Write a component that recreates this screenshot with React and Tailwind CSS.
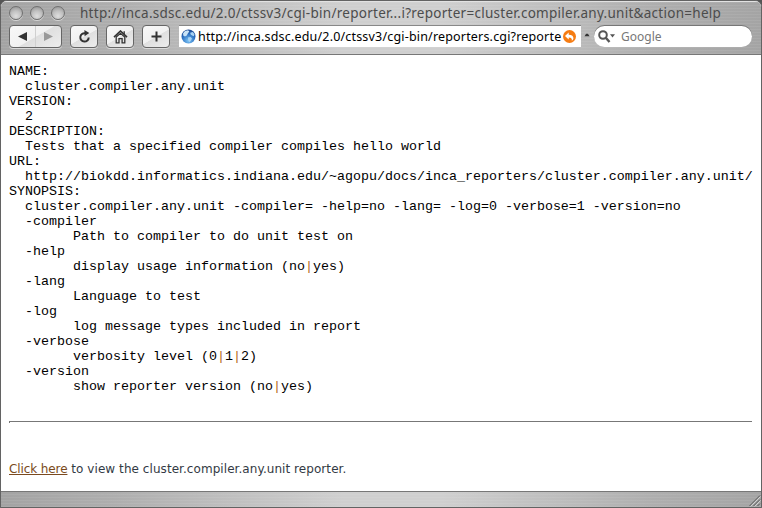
import React from "react";

const REPORT = [
  "NAME:",
  "  cluster.compiler.any.unit",
  "VERSION:",
  "  2",
  "DESCRIPTION:",
  "  Tests that a specified compiler compiles hello world",
  "URL:",
  "  http://biokdd.informatics.indiana.edu/~agopu/docs/inca_reporters/cluster.compiler.any.unit/",
  "SYNOPSIS:",
  "  cluster.compiler.any.unit -compiler= -help=no -lang= -log=0 -verbose=1 -version=no",
  "  -compiler",
  "        Path to compiler to do unit test on",
  "  -help",
  "        display usage information (no|yes)",
  "  -lang",
  "        Language to test",
  "  -log",
  "        log message types included in report",
  "  -verbose",
  "        verbosity level (0|1|2)",
  "  -version",
  "        show reporter version (no|yes)",
];

const METAL =
  "bg-[repeating-linear-gradient(0deg,#ffffff12_0px,#ffffff12_1px,transparent_1px,transparent_3px),linear-gradient(90deg,#a3a3a3_0%,#aeaeae_15%,#cfcfcf_45%,#cfcfcf_58%,#aeaeae_86%,#a4a4a4_100%)]";

function Light() {
  return (
    <span className="block size-[14px] rounded-full border border-[#707070] bg-[radial-gradient(circle_at_50%_75%,#dedede_0%,#c2c2c2_45%,#8d8d8d_100%)] shadow-[0_1px_0_#d5d5d5]" />
  );
}

function Button({ className, children }) {
  return (
    <button
      className={
        "flex h-[23px] items-center justify-center rounded-[4px] border border-[#666] bg-[linear-gradient(150deg,#f8f8f8_0%,#f1f1f1_50%,#dfdfdf_52%,#ededed_100%)] shadow-[0_1px_0_#dadada] " +
        className
      }
    >
      {children}
    </button>
  );
}

function Globe() {
  return (
    <svg width="15" height="15" viewBox="0 0 15 15" className="shrink-0">
      <defs>
        <radialGradient id="sea" cx="0.5" cy="0.8" r="0.8">
          <stop offset="0" stopColor="#7cc4f6" />
          <stop offset="0.6" stopColor="#2b6fc0" />
          <stop offset="1" stopColor="#1b4690" />
        </radialGradient>
      </defs>
      <circle cx="7.5" cy="7.5" r="7" fill="url(#sea)" />
      <path d="M2 4.5 4 2 7 1.2 8.3 2.6 6.8 4.4 5.8 6.6 4 7.6 2.4 6.8z" fill="#c8e3f7" />
      <path d="M9.2 3.8 11.8 3 13.5 5.2 12.8 7.2 11 6.4 9.6 5.6zM7 8.4 9.5 8 11 9.6 9.8 11.8 8.2 13.3 7.2 11z" fill="#a7d2f3" />
    </svg>
  );
}

function Toolbar() {
  return (
    <div className="flex h-[30px] items-start pl-[8px]">
      <Button className="w-[53px]">
        <span className="flex h-full flex-1 items-center justify-center border-r border-[#d0d0d0]">
          <svg width="9" height="9" viewBox="0 0 9 9"><path d="M0 4.5 9 0v9z" fill="#333" /></svg>
        </span>
        <span className="flex flex-1 items-center justify-center">
          <svg width="9" height="9" viewBox="0 0 9 9"><path d="M9 4.5 0 0v9z" fill="#999" /></svg>
        </span>
      </Button>
      <Button className="ml-[8px] w-[28px]">
        <svg width="13" height="13" viewBox="0 0 13 13" fill="none">
          <path d="M7.2 3.2A4.2 4.2 0 1 0 10.7 7.4" stroke="#333" strokeWidth="2" />
          <path d="M6.4 0 11.3 3.1 6.6 6.3z" fill="#333" />
        </svg>
      </Button>
      <Button className="ml-[8px] w-[28px]">
        <svg width="15" height="14" viewBox="0 0 15 14" fill="none" stroke="#333">
          <path d="M1 7.2 7.5 1 14 7.2" strokeWidth="1.6" />
          <path d="M11.2 1.2V4M3.2 7V12.8H6V8.7H9.1V12.8H11.8V7L7.5 3.3z" strokeWidth="1.3" />
        </svg>
      </Button>
      <Button className="ml-[8px] w-[28px]">
        <svg width="11" height="11" viewBox="0 0 11 11"><path d="M5.5 .5v10M.5 5.5h10" stroke="#333" strokeWidth="2" /></svg>
      </Button>
      <div className="ml-[9px] mt-px flex h-[21px] w-[402px] items-center bg-white pl-[2px] shadow-[0_-1px_0_#888]">
        <Globe />
        <span className="ml-[2px] w-[365px] whitespace-nowrap font-['Noto_Sans',sans-serif] text-[12.5px] leading-[20px] tracking-[0.18px] text-black">
          http://inca.sdsc.edu/2.0/ctssv3/cgi-bin/reporters.cgi?reporte
        </span>
        <svg width="13" height="13" viewBox="0 0 13 13" className="shrink-0">
          <circle cx="6.5" cy="6.5" r="6.5" fill="#f57c13" />
          <path d="M2 6 5.7 2.5V4.7C9 4.7 10.6 6.3 10.4 8.5 10.3 9.5 9.7 10.3 8.8 10.8 9.2 8.8 8.5 7.5 5.7 7.5V9.5z" fill="#fff" />
        </svg>
      </div>
      <svg width="6" height="4" viewBox="0 0 6 4" className="ml-[3px] mt-[8px]">
        <path d="M.5 3.2Q3-2.2 5.5 3.2z" fill="#333" />
      </svg>
      <div className="ml-[4px] mt-px flex h-[21px] w-[158px] items-center rounded-full bg-white pl-[4px] shadow-[0_-1px_0_#777]">
        <svg width="18" height="13" viewBox="0 0 18 13" fill="none">
          <circle cx="5" cy="5" r="3.8" stroke="#555" strokeWidth="2" />
          <path d="M7.8 7.8 11.5 12" stroke="#555" strokeWidth="2.4" />
          <path d="M12 4.3h5L14.5 7.4z" fill="#555" />
        </svg>
        <span className="ml-[5px] font-['Noto_Sans',sans-serif] text-[12px] leading-[20px] text-[#777]">Google</span>
      </div>
    </div>
  );
}

function ReportLine({ text }) {
  return (
    <div className="h-[15px]">
      {text.split("|").map((part, i) => (
        <React.Fragment key={i}>
          {i > 0 && <span className="text-[#b56a20]">|</span>}
          {part}
        </React.Fragment>
      ))}
    </div>
  );
}

export default function App() {
  return (
    <div className="h-[508px] w-[762px] overflow-hidden bg-[#555]">
      <div className="flex h-[508px] flex-col overflow-hidden rounded-t-[7px] border border-[#636363] bg-white">
        <header className={"h-[54px] shrink-0 border-b border-[#777] shadow-[inset_0_1px_0_#e2e2e2] " + METAL}>
          <div className="flex h-[24px] items-center pl-[8px]">
            <div className="flex gap-[7px]">
              <Light />
              <Light />
              <Light />
            </div>
            <h1 className="ml-[15px] whitespace-nowrap font-['Noto_Sans',sans-serif] text-[13.5px] leading-[20px] tracking-[0.27px] text-[#4c4c4c]">
              http://inca.sdsc.edu/2.0/ctssv3/cgi-bin/reporter...i?reporter=cluster.compiler.any.unit&amp;action=help
            </h1>
          </div>
          <Toolbar />
        </header>
        <main className="flex-1 pl-[8px] pr-[9px] pt-[9px]">
          <div className="whitespace-pre font-['Liberation_Mono',monospace] text-[13.333px] leading-[15px] text-black">
            {REPORT.map((line) => (
              <ReportLine key={line} text={line} />
            ))}
          </div>
          <div className="mt-[27px] h-[2px] border-l border-t border-[#777]" />
          <p className="mt-[37px] whitespace-nowrap font-['DejaVu_Sans',sans-serif] text-[12px] leading-[18px] tracking-[0.06px] text-[#333a44]">
            <a href="#reporter" className="tracking-[-0.1px] text-[#7a4a20] underline">Click here</a> to view the cluster.compiler.any.unit reporter.
          </p>
        </main>
        <footer className={"flex h-[16px] shrink-0 items-end justify-end border-t border-[#777] " + METAL}>
          <svg width="13" height="13" viewBox="0 0 13 13" fill="none">
            <path d="M1.5 12 12 1.5M5.5 12 12 5.5M9.5 12 12 9.5" stroke="#555" />
            <path d="M2.5 12.5 12.5 2.5M6.5 12.5 12.5 6.5" stroke="#ddd" strokeWidth=".8" />
          </svg>
        </footer>
      </div>
    </div>
  );
}
